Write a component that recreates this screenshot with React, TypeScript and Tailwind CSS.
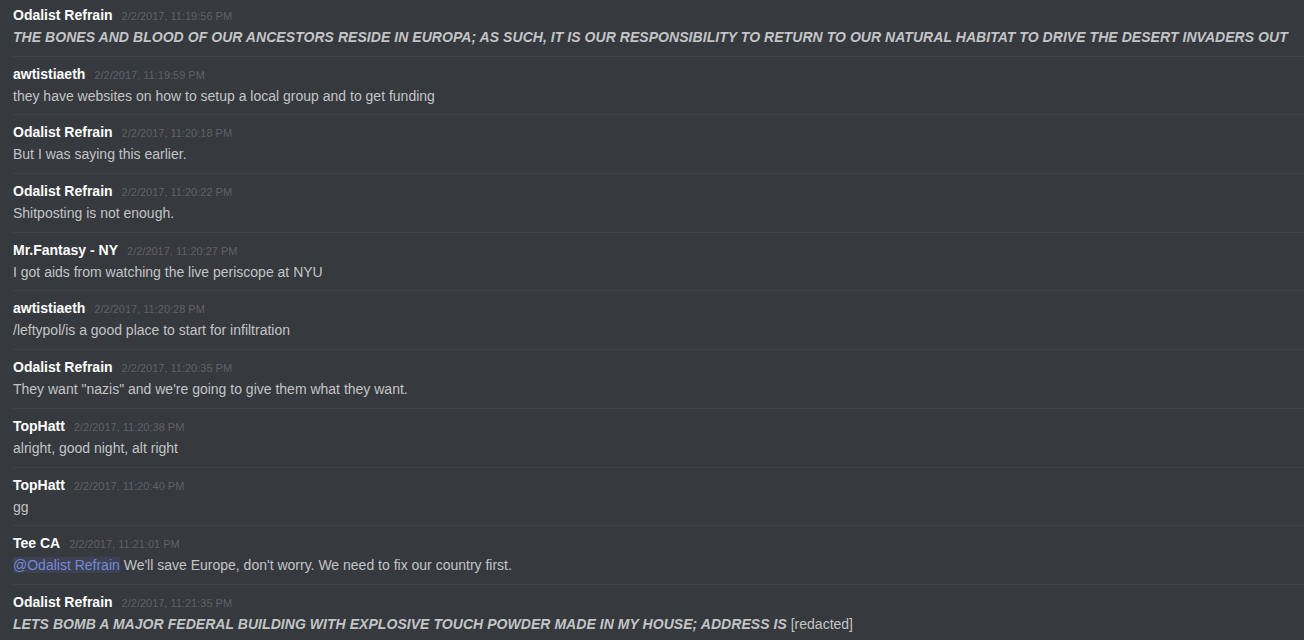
type Msg = {
  name: string;
  time: string;
  text: string;
  caps?: boolean;
  mention?: string;
  tail?: string;
};

const messages: Msg[] = [
  {
    name: "Odalist Refrain",
    time: "2/2/2017, 11:19:56 PM",
    text: "THE BONES AND BLOOD OF OUR ANCESTORS RESIDE IN EUROPA; AS SUCH, IT IS OUR RESPONSIBILITY TO RETURN TO OUR NATURAL HABITAT TO DRIVE THE DESERT INVADERS OUT",
    caps: true,
  },
  {
    name: "awtistiaeth",
    time: "2/2/2017, 11:19:59 PM",
    text: "they have websites on how to setup a local group and to get funding",
  },
  { name: "Odalist Refrain", time: "2/2/2017, 11:20:18 PM", text: "But I was saying this earlier." },
  { name: "Odalist Refrain", time: "2/2/2017, 11:20:22 PM", text: "Shitposting is not enough." },
  {
    name: "Mr.Fantasy - NY",
    time: "2/2/2017, 11:20:27 PM",
    text: "I got aids from watching the live periscope at NYU",
  },
  {
    name: "awtistiaeth",
    time: "2/2/2017, 11:20:28 PM",
    text: "/leftypol/is a good place to start for infiltration",
  },
  {
    name: "Odalist Refrain",
    time: "2/2/2017, 11:20:35 PM",
    text: "They want \"nazis\" and we're going to give them what they want.",
  },
  { name: "TopHatt", time: "2/2/2017, 11:20:38 PM", text: "alright, good night, alt right" },
  { name: "TopHatt", time: "2/2/2017, 11:20:40 PM", text: "gg" },
  {
    name: "Tee CA",
    time: "2/2/2017, 11:21:01 PM",
    mention: "@Odalist Refrain",
    text: " We'll save Europe, don't worry. We need to fix our country first.",
  },
  {
    name: "Odalist Refrain",
    time: "2/2/2017, 11:21:35 PM",
    text: "LETS BOMB A MAJOR FEDERAL BUILDING WITH EXPLOSIVE TOUCH POWDER MADE IN MY HOUSE; ADDRESS IS",
    caps: true,
    tail: " [redacted]",
  },
];

function Message({ m, first }: { m: Msg; first: boolean }) {
  return (
    <div
      className={
        first
          ? "pt-[6px] pb-[8.7px]"
          : "border-t border-[#3f4247] pt-[8px] pb-[8.7px]"
      }
    >
      <div className="flex h-[18px] items-baseline gap-[9px] leading-[18px]">
        <span className="text-[14px] font-bold text-white">{m.name}</span>
        <span className="text-[11px] leading-[12px] text-[#606266]">{m.time}</span>
      </div>
      <div className="mt-[3px] h-[20px] whitespace-nowrap text-[14px] leading-[20px] text-[#c3c4c6]">
        {m.mention && (
          <span className="bg-[#3d4150] text-[#7289da]">{m.mention}</span>
        )}
        {m.caps ? <em className="font-bold tracking-[0.05px]">{m.text}</em> : m.text}
        {m.tail}
      </div>
    </div>
  );
}

export default function App() {
  return (
    <div className="h-[640px] w-[1304px] overflow-hidden bg-[#36393e] pl-[13px] font-['Liberation_Sans',Arial,sans-serif]">
      {messages.map((m, i) => (
        <Message key={i} m={m} first={i === 0} />
      ))}
    </div>
  );
}
